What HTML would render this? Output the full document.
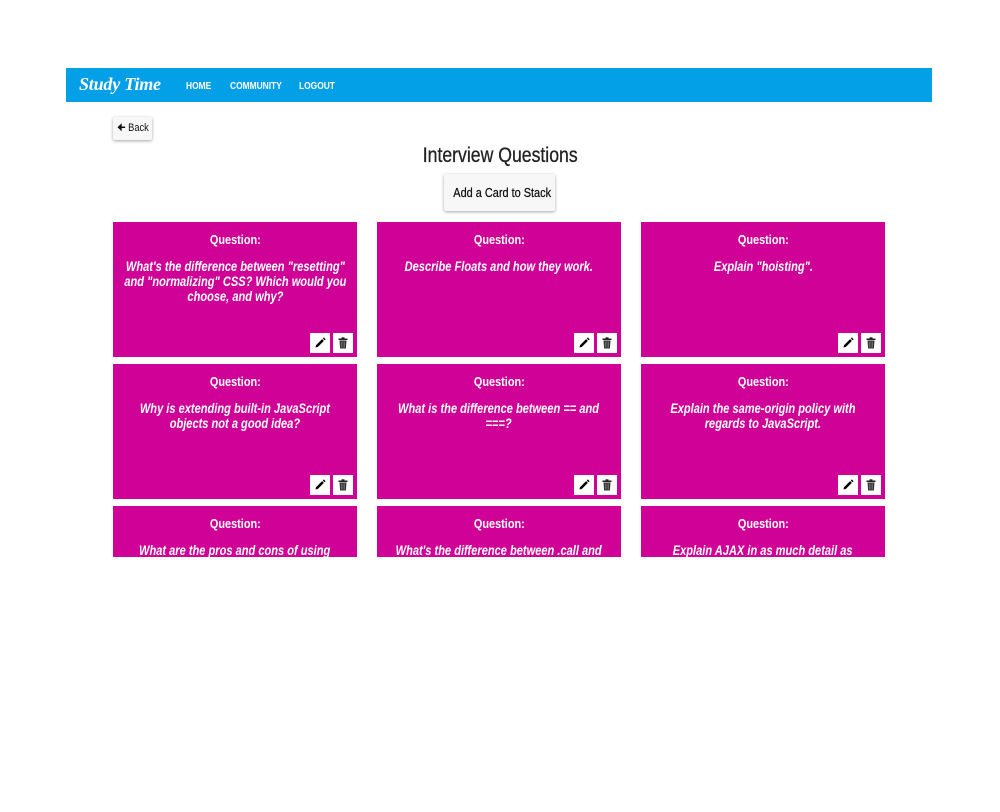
<!DOCTYPE html>
<html><head><meta charset="utf-8"><style>
*{box-sizing:border-box;margin:0;padding:0}
body{width:1000px;height:812px;background:#fff;font-family:"Liberation Sans",sans-serif;position:relative;overflow:hidden}
.sx{display:inline-block;transform:scaleX(.84);white-space:nowrap}
.nav{position:absolute;left:66px;top:68px;width:866px;height:34px;background:#03a0e7;color:#fff}
.brand{position:absolute;left:13px;top:6px;font-family:"Liberation Serif",serif;font-style:italic;font-weight:bold;font-size:18px;letter-spacing:-.2px}
.nl{position:absolute;top:12px;font-size:10.5px;font-weight:bold;transform-origin:left;transform:scaleX(.8);white-space:nowrap}
.back{position:absolute;left:113px;top:117px;width:39px;height:23px;background:#f7f7f7;box-shadow:0 1px 3px rgba(0,0,0,.35);border-radius:2px;font-size:11px;line-height:23px;text-align:center;color:#111}
h1{position:absolute;left:0;width:1000px;top:144px;text-align:center;font-size:21px;font-weight:normal;color:#222;-webkit-text-stroke:.3px #222}
.add{position:absolute;left:444px;top:174px;width:111px;height:37px;background:#f7f7f7;box-shadow:0 1px 3px rgba(0,0,0,.35);border-radius:2px;font-size:13px;line-height:37px;text-align:center;color:#111;-webkit-text-stroke:.25px #111}
.clip{position:absolute;left:0;top:0;width:1000px;height:557px;overflow:hidden}
.card{position:absolute;width:244px;height:135px;background:#cf0197;color:#fff;text-align:center}
.card .q{margin-top:10px;font-size:13px;font-weight:bold}
.card .t{margin:12px -40px 0;font-size:13.5px;font-style:italic;font-weight:bold;line-height:15px}
.card .t .sx{transform:scaleX(.82)}
.b{position:absolute;top:111px;width:20px;height:20px;background:#fff}
.b svg{position:absolute;left:4px;top:4px}
</style></head><body>
<div class="nav"><div class="brand">Study Time</div>
<div class="nl" style="left:120px">HOME</div><div class="nl" style="left:164px">COMMUNITY</div><div class="nl" style="left:233px">LOGOUT</div></div>
<div class="back"><span class="sx">&#129032; Back</span></div>
<h1><span class="sx">Interview Questions</span></h1>
<div class="add"><span class="sx">Add a Card to Stack</span></div>
<div class="clip">
<div class="card" style="left:113px;top:222px"><div class="q"><span class="sx">Question:</span></div><div class="t"><span class="sx">What's the difference between "resetting"<br>and "normalizing" CSS? Which would you<br>choose, and why?</span></div><div class="b E" style="left:197px"></div><div class="b T" style="left:220px"></div></div>
<div class="card" style="left:377px;top:222px"><div class="q"><span class="sx">Question:</span></div><div class="t"><span class="sx">Describe Floats and how they work.</span></div><div class="b E" style="left:197px"></div><div class="b T" style="left:220px"></div></div>
<div class="card" style="left:641px;top:222px"><div class="q"><span class="sx">Question:</span></div><div class="t"><span class="sx">Explain "hoisting".</span></div><div class="b E" style="left:197px"></div><div class="b T" style="left:220px"></div></div>
<div class="card" style="left:113px;top:364px"><div class="q"><span class="sx">Question:</span></div><div class="t"><span class="sx">Why is extending built-in JavaScript<br>objects not a good idea?</span></div><div class="b E" style="left:197px"></div><div class="b T" style="left:220px"></div></div>
<div class="card" style="left:377px;top:364px"><div class="q"><span class="sx">Question:</span></div><div class="t"><span class="sx">What is the difference between == and<br>===?</span></div><div class="b E" style="left:197px"></div><div class="b T" style="left:220px"></div></div>
<div class="card" style="left:641px;top:364px"><div class="q"><span class="sx">Question:</span></div><div class="t"><span class="sx">Explain the same-origin policy with<br>regards to JavaScript.</span></div><div class="b E" style="left:197px"></div><div class="b T" style="left:220px"></div></div>
<div class="card" style="left:113px;top:506px"><div class="q"><span class="sx">Question:</span></div><div class="t"><span class="sx">What are the pros and cons of using</span></div></div>
<div class="card" style="left:377px;top:506px"><div class="q"><span class="sx">Question:</span></div><div class="t"><span class="sx">What's the difference between .call and</span></div></div>
<div class="card" style="left:641px;top:506px"><div class="q"><span class="sx">Question:</span></div><div class="t"><span class="sx">Explain AJAX in as much detail as</span></div></div>
</div>
<script>
document.querySelectorAll('.E').forEach(e=>e.innerHTML='<svg width="12" height="12" viewBox="0 0 12 12"><path d="M1.5 10.5l.6-2.4 6-6 1.8 1.8-6 6z" fill="#000"/><path d="M8.8 1.4l1-1 1.8 1.8-1 1z" fill="#000"/></svg>');
document.querySelectorAll('.T').forEach(e=>e.innerHTML='<svg width="12" height="12" viewBox="0 0 12 12"><rect x="1.5" y="1.5" width="9" height="1.5" fill="#222"/><rect x="4.5" y="0.3" width="3" height="1.5" fill="#222"/><path d="M2.5 3.5h7l-.6 8h-5.8z" fill="#333"/><path d="M4.5 4.5v6M6 4.5v6M7.5 4.5v6" stroke="#888" stroke-width=".6"/></svg>');
</script>
</body></html>
